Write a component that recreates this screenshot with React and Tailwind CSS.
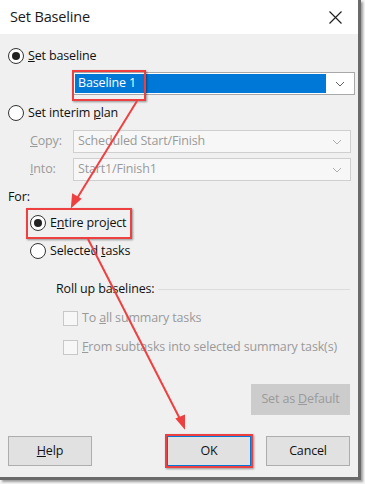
import React from 'react';

const font = { fontFamily: '"Open Sans", "Noto Sans", sans-serif', letterSpacing: '-0.15px' };

function Radio({ checked }) {
  return (
    <span className="w-[16px] h-[16px] rounded-full border border-[#333] bg-white flex items-center justify-center shrink-0">
      {checked && <span className="w-[8px] h-[8px] rounded-full bg-[#222]" />}
    </span>
  );
}

function Chevron({ color = '#606060' }) {
  return (
    <svg width="10" height="6" viewBox="0 0 10 6">
      <path d="M1 1 L5 5 L9 1" fill="none" stroke={color} strokeWidth="1" />
    </svg>
  );
}

function Combo({ value, disabled, w }) {
  return (
    <div className={`h-[23px] ${w} border border-[#cfcfcf] bg-[#f7f7f7] flex items-center`}>
      <span className={`flex-1 pl-[4px] ${disabled ? 'text-[#9a9a9a]' : 'text-black'}`}>{value}</span>
      <span className="w-[26px] flex justify-center"><Chevron color="#b0b0b0" /></span>
    </div>
  );
}

function Check({ children }) {
  return (
    <div className="flex items-center gap-[4px] ml-[63px] h-[16px]">
      <span className="w-[15px] h-[15px] border border-[#c8c8c8] bg-[#f7f7f7]" />
      <span className="text-[#9a9a9a]">{children}</span>
    </div>
  );
}

export default function App() {
  return (
    <div className="w-[365px] h-[484px] bg-[#f4f4f4] relative overflow-hidden" style={font}>
      <div className="w-[361px] h-[480px] border-r-[3px] border-b-[3px] border-[#6a6a6a] shadow-[2px_2px_2px_rgba(0,0,0,0.35)] bg-[#f0f0f0] flex flex-col">
        {/* title bar */}
        <div className="h-[34px] bg-white flex items-center justify-between pl-[10px] pr-[16px]">
          <span className="text-[14.5px] text-[#1a1a1a]">Set Baseline</span>
          <svg width="13" height="13" viewBox="0 0 13 13">
            <path d="M0.5 0.5 L12.5 12.5 M12.5 0.5 L0.5 12.5" stroke="#222" strokeWidth="1.2" />
          </svg>
        </div>

        <div className="flex-1 flex flex-col text-[12.5px] text-[#111]">
          <div className="flex items-center gap-[4px] ml-[8px] mt-[14px] h-[16px]">
            <Radio checked />
            <span><span className="underline">S</span>et baseline</span>
          </div>

          <div className="ml-[73px] mt-[8px] w-[282px] h-[23px] border border-[#a8a8a8] bg-white flex items-center p-[1px]">
            <div className="flex-1 h-full bg-[#0078d7] text-white pl-[3px] flex items-center">Baseline 1</div>
            <span className="w-[27px] flex justify-center"><Chevron /></span>
          </div>

          <div className="flex items-center gap-[4px] ml-[8px] mt-[10px] h-[16px]">
            <Radio />
            <span>Set interim <span className="underline">p</span>lan</span>
          </div>

          <div className="flex items-center ml-[30px] mt-[9px]">
            <span className="w-[43px] text-[#9a9a9a]"><span className="underline">C</span>opy:</span>
            <Combo value="Scheduled Start/Finish" disabled w="w-[278px]" />
          </div>
          <div className="flex items-center ml-[30px] mt-[5px]">
            <span className="w-[43px] text-[#9a9a9a]"><span className="underline">I</span>nto:</span>
            <Combo value="Start1/Finish1" disabled w="w-[278px]" />
          </div>

          <div className="ml-[8px] mt-[8px] h-[16px] leading-[16px]">For:</div>

          <div className="flex items-center gap-[4px] ml-[30px] mt-[10px] h-[16px]">
            <Radio checked />
            <span>E<span className="underline">n</span>tire project</span>
          </div>
          <div className="flex items-center gap-[4px] ml-[30px] mt-[12px] h-[16px]">
            <Radio />
            <span>Selected <span className="underline">t</span>asks</span>
          </div>

          <div className="flex items-center ml-[56px] mr-[8px] mt-[22px] h-[16px] gap-[4px]">
            <span>Roll up baselines:</span>
            <span className="flex-1 h-px bg-[#dcdcdc]" />
          </div>

          <div className="mt-[13px]"><Check>To <span className="underline">a</span>ll summary tasks</Check></div>
          <div className="mt-[13px]"><Check><span className="underline">F</span>rom subtasks into selected summary task(s)</Check></div>

          <div className="flex justify-end mr-[8px] mt-[29px]">
            <div className="w-[99px] h-[31px] bg-[#cccccc] text-[#9a9a9a] flex items-center justify-center">
              <span>Set as <span className="underline">D</span>efault</span>
            </div>
          </div>

          <div className="flex items-center justify-between ml-[8px] mr-[8px] mt-[19px]">
            <div className="w-[84px] h-[30px] bg-[#e1e1e1] border border-[#adadad] flex items-center justify-center">
              <span><span className="underline">H</span>elp</span>
            </div>
            <div className="flex gap-[13px] items-center">
              <div className="w-[88px] h-[34px] border-2 border-[#ee4040] shadow-[1px_1px_2px_rgba(0,0,0,0.4)] flex">
                <div className="flex-1 bg-[#e1e1e1] border border-[#0078d7] flex items-center justify-center">OK</div>
              </div>
              <div className="w-[84px] h-[30px] bg-[#e1e1e1] border border-[#adadad] flex items-center justify-center">Cancel</div>
            </div>
          </div>
        </div>
      </div>

      {/* annotation boxes and arrows */}
      <div className="absolute left-[72px] top-[70px] w-[74px] h-[31px] border-2 border-[#ee4040] shadow-[1px_1px_2px_rgba(0,0,0,0.4)]" />
      <div className="absolute left-[26px] top-[208px] w-[106px] h-[31px] border-2 border-[#ee4040] shadow-[1px_1px_2px_rgba(0,0,0,0.4)]" />
      <svg className="absolute left-0 top-0" width="365" height="484" viewBox="0 0 365 484">
        <g stroke="#ee4040" strokeWidth="2" fill="#ee4040">
          <line x1="137" y1="101" x2="76" y2="200" />
          <polygon points="72,206 73,195 80,199" />
          <line x1="88" y1="239" x2="181" y2="421" />
          <polygon points="184,427 177,419 184,416" />
        </g>
      </svg>
    </div>
  );
}
